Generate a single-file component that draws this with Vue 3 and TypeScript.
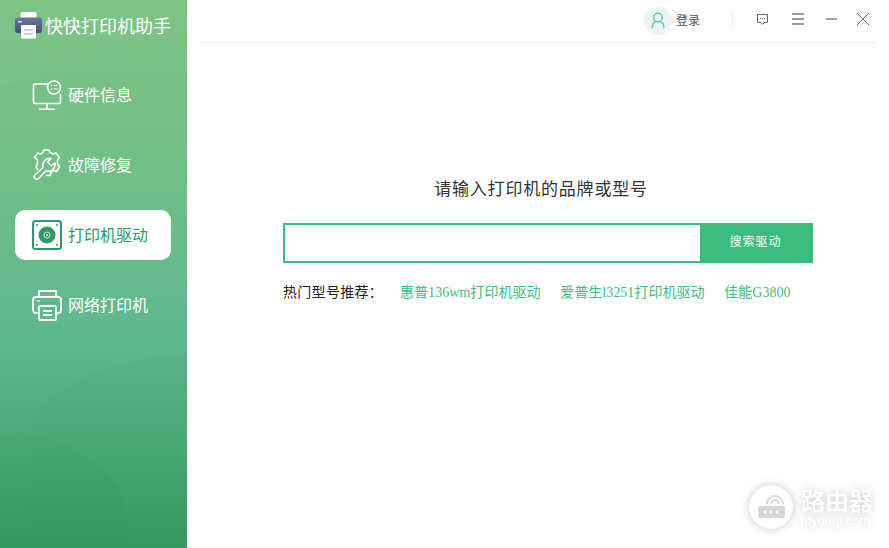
<script setup lang="ts">
const hotLinks = ['惠普136wm打印机驱动', '爱普生l3251打印机驱动', '佳能G3800']
</script>

<template>
  <div class="app">
    <aside class="sidebar">
      <svg class="waves" width="187" height="548" viewBox="0 0 187 548">
        <path d="M0 85 C50 80 70 50 110 48 C140 46 165 35 187 30 L187 0 L0 0 Z" fill="#fff" opacity="0.02" />
        <path d="M30 425 C50 390 100 360 187 353 L187 548 L30 548 Z" fill="#2f8f58" opacity="0.035" />
        <path d="M0 435 C40 425 90 450 120 490 L130 548 L0 548 Z" fill="#2f8f58" opacity="0.05" />
      </svg>
      <div class="logo">
        <svg width="27" height="28" viewBox="0 0 27 28">
          <defs>
            <linearGradient id="logoBody" x1="0" y1="0" x2="0" y2="1">
              <stop offset="0" stop-color="#6d7a9c" />
              <stop offset="1" stop-color="#434c78" />
            </linearGradient>
          </defs>
          <rect x="5.5" y="1" width="16" height="8" rx="1.5" fill="#fff" />
          <rect x="0" y="6.5" width="27" height="15.5" rx="3" fill="url(#logoBody)" />
          <rect x="3" y="10" width="4" height="1.5" fill="#cfe0ea" />
          <rect x="6" y="14" width="15" height="13.5" rx="1" fill="#fff" />
          <rect x="9" y="18" width="9" height="2" fill="#c9cde6" />
          <rect x="9" y="22" width="9" height="2" fill="#c9cde6" />
        </svg>
        <span class="logo-text">快快打印机助手</span>
      </div>
      <nav class="menu">
        <div class="menu-item">
          <svg width="30" height="30" viewBox="0 0 30 30" fill="none" stroke="#fff" stroke-width="1.6">
            <path d="M16 4 H3 a1.5 1.5 0 0 0 -1.5 1.5 V22 a1.5 1.5 0 0 0 1.5 1.5 H27 a1.5 1.5 0 0 0 1.5 -1.5 V14" />
            <path d="M15 24 V29 M7 29.3 H23" />
            <circle cx="22" cy="7.5" r="6.5" />
            <path d="M18.5 5.5 H20 M21.5 5.5 H25.5 M18.5 9 H20 M21.5 9 H25.5" stroke-width="1.2" />
          </svg>
          <span>硬件信息</span>
        </div>
        <div class="menu-item">
          <svg width="30" height="32" viewBox="0 0 30 32" fill="none" stroke="#fff" stroke-width="1.6" stroke-linejoin="round">
            <path d="M11 3.5 L12 1 H17 L18 3.5 L21 5 L24 4 L27.5 8.5 L25.5 11 V15 L27.5 18 L24.5 22.5 L21.5 21.5 L19 23.5 L18 26.5 H14" />
            <path d="M6 21 L4 18 L5.5 15 V11 L2.5 8.5 L6 4 L8.5 5 L11 3.5" />
            <path d="M19 9.5 L15.5 13 L19.5 17 L23 14 A7 7 0 0 1 14 22 L6.5 29.5 A2.4 2.4 0 0 1 3 26 L11 18.5 A7 7 0 0 1 19 9.5 Z" />
          </svg>
          <span>故障修复</span>
        </div>
        <div class="menu-item active">
          <svg width="30" height="30" viewBox="0 0 30 30">
            <rect x="1" y="1" width="28" height="28" rx="2.5" fill="none" stroke="#2f9a68" stroke-width="2" />
            <circle cx="15" cy="15" r="8.5" fill="#2f9a68" />
            <circle cx="15" cy="15" r="3" fill="none" stroke="#cfe8da" stroke-width="1" />
            <circle cx="15" cy="15" r="1" fill="#cfe8da" />
            <g fill="#2f9a68">
              <circle cx="5" cy="5" r="1" /><circle cx="25" cy="5" r="1" />
              <circle cx="5" cy="25" r="1" /><circle cx="25" cy="25" r="1" />
            </g>
          </svg>
          <span>打印机驱动</span>
        </div>
        <div class="menu-item">
          <svg width="30" height="32" viewBox="0 0 30 32" fill="none" stroke="#fff" stroke-width="1.8">
            <path d="M7 8 V2 H24 V8" />
            <path d="M6 24 H4 a3 3 0 0 1 -3 -3 V11 a3 3 0 0 1 3 -3 H26 a3 3 0 0 1 3 3 V21 a3 3 0 0 1 -3 3 H25" />
            <rect x="7" y="17" width="17" height="14" rx="1" />
            <path d="M11 22 H20 M11 26 H20" />
            <path d="M5 12 H8" stroke-width="1.2" />
          </svg>
          <span>网络打印机</span>
        </div>
      </nav>
    </aside>

    <main class="main">
      <header class="topbar">
        <div class="user">
          <div class="avatar">
            <svg width="14" height="17" viewBox="0 0 14 17" fill="none" stroke="#6cc795" stroke-width="1.4">
              <circle cx="7" cy="5.5" r="4.3" />
              <path d="M1 16.5 C1 12.5 3 10 5 9.5 M13 16.5 C13 12.5 11 10 9 9.5" />
            </svg>
          </div>
          <span>登录</span>
        </div>
        <div class="divider"></div>
        <div class="tools">
          <svg class="tool-feedback" width="13" height="13" viewBox="0 0 13 13" fill="none" stroke="#666">
            <path d="M1.5 1.5 H11.5 V9.5 H8 L6.5 11.5 L5 9.5 H1.5 Z" />
            <path d="M4 5.5 H5 M6 5.5 H7 M8 5.5 H9" />
          </svg>
          <svg width="12" height="12" viewBox="0 0 12 12" stroke="#777" stroke-width="1.3">
            <path d="M0 1 H12 M0 6 H12 M0 11 H12" />
          </svg>
          <svg width="12" height="12" viewBox="0 0 12 12" stroke="#666" stroke-width="1.2">
            <path d="M1 6 H12" />
          </svg>
          <svg class="tool-close" width="14" height="14" viewBox="0 0 14 14" stroke="#666" stroke-width="1">
            <path d="M1 1 L13 13 M13 1 L1 13" />
          </svg>
        </div>
      </header>

      <section class="search">
        <h2>请输入打印机的品牌或型号</h2>
        <div class="search-bar">
          <input type="text" />
          <button>搜索驱动</button>
        </div>
        <div class="hot">
          <span class="hot-label">热门型号推荐：</span>
          <a v-for="link in hotLinks" :key="link">{{ link }}</a>
        </div>
      </section>
    </main>

    <div class="watermark">
      <div class="wm-circle">
        <svg width="32" height="28" viewBox="0 0 32 28">
          <rect x="3" y="13" width="27" height="12" rx="2" fill="#d8d8d8" />
          <g fill="#fff"><circle cx="10" cy="19" r="1.5" /><circle cx="16" cy="19" r="1.5" /><circle cx="22" cy="19" r="1.5" /></g>
          <path d="M12 11 a8 8 0 0 1 16 0 M16 11 a4 4 0 0 1 8 0" fill="none" stroke="#d8d8d8" stroke-width="2" />
        </svg>
      </div>
      <div class="wm-text">
        <div class="wm-name">路由器</div>
        <div class="wm-url">luyouqi.com</div>
      </div>
    </div>
  </div>
</template>

<style scoped>
.app {
  position: relative;
  display: flex;
  width: 889px;
  height: 548px;
  overflow: hidden;
  background: #fff;
  font-family: "Liberation Serif", "Noto Sans CJK SC", serif;
}

.sidebar {
  position: relative;
  width: 187px;
  flex-shrink: 0;
  background: linear-gradient(180deg, #7dc283 0%, #73bf88 30%, #60b88f 60%, #369a60 100%);
}

.waves {
  position: absolute;
  left: 0;
  top: 0;
}

.logo {
  position: relative;
  display: flex;
  align-items: center;
  gap: 3px;
  padding: 11px 0 0 15px;
  height: 28px;
}

.logo-text {
  font-family: "Noto Sans CJK SC", sans-serif;
  font-size: 18px;
  font-weight: 400;
  color: #fff;
  white-space: nowrap;
}

.menu {
  position: relative;
  display: flex;
  flex-direction: column;
  gap: 20px;
  margin: 31px 16px 0 15px;
}

.menu-item {
  display: flex;
  align-items: center;
  gap: 6px;
  height: 50px;
  padding-left: 17px;
  border-radius: 10px;
  color: #fff;
  font-size: 16px;
  font-family: "Noto Sans CJK SC", sans-serif;
}

.menu-item span {
  margin-bottom: 2px;
}

.menu-item.active {
  background: #fff;
  color: #2f9a68;
}

.main {
  flex: 1;
  display: flex;
  flex-direction: column;
}

.topbar {
  display: flex;
  align-items: center;
  justify-content: flex-end;
  height: 42px;
  margin: 0 14px 0 13px;
  border-bottom: 1px solid #e4f1ee;
}

.user {
  display: flex;
  align-items: center;
  gap: 4px;
  margin-bottom: 1px;
  font-size: 12px;
  font-family: "Noto Sans CJK SC", sans-serif;
  color: #555;
}

.user span {
  margin-bottom: 2px;
}

.avatar {
  display: flex;
  align-items: center;
  justify-content: center;
  width: 28px;
  height: 28px;
  border-radius: 50%;
  background: #eef3f5;
}

.divider {
  width: 1px;
  height: 15px;
  margin: 0 23px 1px 32px;
  background: #e8ecee;
}

.tools {
  display: flex;
  align-items: center;
  gap: 21px;
  padding-right: 5px;
  margin-bottom: 4px;
}

.tool-feedback {
  margin-right: 2px;
}

.tool-close {
  margin-left: -2px;
}

.search {
  margin-left: 96px;
  width: 530px;
  padding-top: 134px;
}

.search h2 {
  margin: 0;
  padding-right: 14px;
  font-size: 17px;
  font-weight: 400;
  line-height: 22px;
  letter-spacing: 0.8px;
  text-align: center;
  color: #333;
  font-family: "Noto Sans CJK SC", sans-serif;
}

.search-bar {
  display: flex;
  height: 40px;
  margin-top: 24px;
  border: 2px solid #3dbd7d;
  box-sizing: border-box;
}

.search-bar input {
  flex: 1;
  min-width: 0;
  border: none;
  outline: none;
}

.search-bar button {
  width: 111px;
  padding: 0 0 6px;
  border: none;
  background: #3dbd7d;
  color: #fff;
  font-size: 12px;
  letter-spacing: 1px;
  font-family: "Noto Sans CJK SC", sans-serif;
}

.hot {
  display: flex;
  margin-top: 20px;
  font-size: 14px;
  line-height: 20px;
  white-space: nowrap;
}

.hot-label {
  width: 117px;
  color: #222;
  letter-spacing: 0.3px;
}

.hot a {
  margin-right: 19.5px;
  letter-spacing: 0.05px;
  color: #3dbd7d;
}

.watermark {
  position: absolute;
  left: 749px;
  top: 485px;
  display: flex;
  align-items: center;
  gap: 8px;
  color: #fff;
  font-family: "Noto Sans CJK SC", sans-serif;
  filter: drop-shadow(0 0 4px rgba(0, 0, 0, 0.22));
}

.wm-circle {
  display: flex;
  align-items: center;
  justify-content: center;
  width: 44px;
  height: 44px;
  border-radius: 50%;
  background: #fff;
}

.wm-name {
  font-size: 24px;
  font-weight: 500;
  line-height: 28px;
}

.wm-url {
  font-size: 13px;
  line-height: 14px;
  font-family: "Liberation Sans", sans-serif;
}
</style>
